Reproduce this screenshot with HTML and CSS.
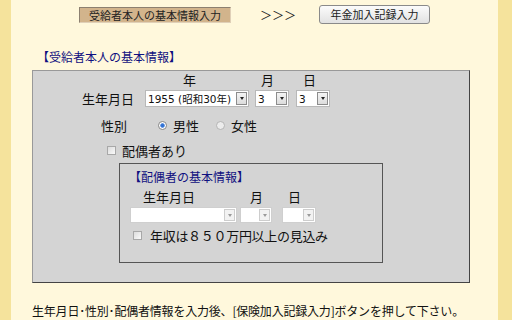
FILE: index.html
```html
<!DOCTYPE html>
<html lang="ja">
<head>
    <meta charset="UTF-8">
    <meta name="viewport" content="width=device-width, initial-scale=1.0">
    <title>受給者本人の基本情報入力</title>
    <link rel="stylesheet" href="styles.css">
</head>
<body>
    <div class="main">
        <div class="steps">
            <span class="step-current">受給者本人の基本情報入力</span>
            <span class="arrows">＞＞＞</span>
            <button class="step-next">年金加入記録入力</button>
        </div>

        <h2 class="section-title">【受給者本人の基本情報】</h2>

        <div class="panel">
            <div class="heads own-heads">
                <span>年</span><span class="h-month">月</span><span class="h-day">日</span>
            </div>
            <div class="birth-row">
                <span class="label">生年月日</span>
                <span class="select s-year"><span class="val">1955 (昭和30年)</span><span class="drop"></span></span>
                <span class="select s-month"><span class="val">3</span><span class="drop"></span></span>
                <span class="select s-day"><span class="val">3</span><span class="drop"></span></span>
            </div>
            <div class="gender-row">
                <span class="label">性別</span>
                <label class="radio first"><span class="dot checked"></span>男性</label>
                <label class="radio"><span class="dot"></span>女性</label>
            </div>
            <label class="check spouse-check"><span class="box"></span>配偶者あり</label>

            <div class="spouse-panel">
                <div class="sub-title">【配偶者の基本情報】</div>
                <div class="heads spouse-heads">
                    <span>生年月日</span><span class="h-month">月</span><span class="h-day">日</span>
                </div>
                <div class="spouse-row">
                    <span class="select disabled s-year"><span class="val"></span><span class="drop"></span></span>
                    <span class="select disabled s-month"><span class="val"></span><span class="drop"></span></span>
                    <span class="select disabled s-day"><span class="val"></span><span class="drop"></span></span>
                </div>
                <label class="check income-check"><span class="box"></span>年収は８５０万円以上の見込み</label>
            </div>
        </div>

        <p class="note">生年月日･性別･配偶者情報を入力後、[保険加入記録入力]ボタンを押して下さい。</p>
    </div>
</body>
</html>
```

FILE: styles.css
```css
body {
    margin: 0;
    background: #f5e39c;
    font-family: "Noto Sans CJK JP", sans-serif;
    color: #111;
}
.main {
    margin-left: 11px;
    width: 487px;
    height: 320px;
    background: #fff8dc;
    overflow: hidden;
}

/* step navigation */
.steps {
    display: flex;
    align-items: center;
    height: 19px;
    padding: 5px 0 0 68px;
}
.step-current {
    box-sizing: border-box;
    width: 152px;
    height: 16px;
    background: #d2b48c;
    border: 1px solid #8c8070;
    border-right-color: #e0d0b8;
    border-bottom-color: #e0d0b8;
    font-size: 11px;
    line-height: 14px;
    text-align: center;
    color: #222;
}
.arrows {
    margin-left: 29px;
    width: 37px;
    font-size: 12px;
    color: #222;
}
.step-next {
    margin-left: 22px;
    width: 111px;
    height: 19px;
    padding: 0;
    font-family: inherit;
    font-size: 11px;
    line-height: 17px;
    color: #222;
    background: linear-gradient(#fbfbfb, #e2e2e2);
    border: 1px solid #8a8a8a;
    border-radius: 3px;
}

.section-title {
    margin: 25px 0 0 26px;
    font-size: 12px;
    font-weight: normal;
    line-height: 16px;
    color: #101080;
}

/* main gray panel */
.panel {
    box-sizing: border-box;
    margin: 5px 0 0 21px;
    width: 438px;
    height: 213px;
    background: #d4d4d4;
    border: 1px solid #444;
    border-top-color: #999;
    border-left-color: #999;
    font-size: 13px;
}
.heads {
    display: flex;
    height: 14px;
    line-height: 14px;
}
.own-heads {
    margin-top: 2px;
    padding-left: 150px;
}
.own-heads .h-month { margin-left: 65px; }
.own-heads .h-day { margin-left: 29px; }

.birth-row {
    display: flex;
    align-items: center;
    margin-top: 3px;
    height: 17px;
    padding-left: 49px;
}
.birth-row .label {
    width: 63px;
    line-height: 17px;
}

/* fake select boxes */
.select {
    box-sizing: border-box;
    display: flex;
    align-items: center;
    height: 17px;
    background: #fff;
    border: 1px solid #b8b8b8;
    font-family: "DejaVu Sans", "Noto Sans CJK JP", sans-serif;
    font-size: 10.5px;
}
.select .val {
    flex: 1;
    padding-left: 2px;
    white-space: nowrap;
    overflow: hidden;
}
.select .drop {
    box-sizing: border-box;
    width: 11px;
    height: 13px;
    margin-right: 1px;
    background: linear-gradient(#f4f4f4, #dcdcdc);
    border: 1px solid #8c8c8c;
    display: flex;
    align-items: center;
    justify-content: center;
}
.select .drop::after {
    content: "";
    border-left: 2.5px solid transparent;
    border-right: 2.5px solid transparent;
    border-top: 3px solid #222;
}
.birth-row .s-year { width: 104px; }
.birth-row .s-month { width: 34px; margin-left: 6px; }
.birth-row .s-day { width: 34px; margin-left: 7px; }

.select.disabled {
    height: 16px;
    border-color: #cfcfcf;
}
.select.disabled .drop {
    height: 12px;
    background: #f2f2f2;
    border-color: #cdcdcd;
}
.select.disabled .drop::after {
    border-top-color: #9a9a9a;
}

/* gender radios */
.gender-row {
    display: flex;
    align-items: center;
    margin-top: 11px;
    height: 15px;
    padding-left: 68px;
}
.gender-row .label { width: 26px; }
.radio {
    display: flex;
    align-items: center;
    margin-left: 17px;
}
.radio.first { margin-left: 31px; }
.dot {
    box-sizing: border-box;
    width: 9px;
    height: 9px;
    margin-right: 6px;
    border-radius: 50%;
    border: 1px solid #b4b4b4;
    background: #ececec;
}
.dot.checked {
    border-color: #888;
    background: radial-gradient(circle, #2e6fd0 0, #3a78d8 1.8px, #fff 2.6px);
}

/* checkboxes */
.check {
    display: flex;
    align-items: center;
}
.box {
    box-sizing: border-box;
    width: 9px;
    height: 9px;
    border: 1px solid #a8a8a8;
    background: linear-gradient(135deg, #dcdcdc, #fafafa);
}
.spouse-check {
    margin-top: 10px;
    height: 15px;
    padding-left: 74px;
}
.spouse-check .box { margin-right: 6px; }

/* spouse sub panel */
.spouse-panel {
    box-sizing: border-box;
    margin: 5px 0 0 86px;
    width: 264px;
    height: 100px;
    border: 1px solid #555;
}
.sub-title {
    padding: 6px 0 0 9px;
    font-size: 12px;
    line-height: 14px;
    color: #101080;
}
.spouse-heads {
    margin-top: 6px;
    padding-left: 23px;
}
.spouse-heads .h-month { margin-left: 55px; }
.spouse-heads .h-day { margin-left: 25px; }

.spouse-row {
    display: flex;
    margin-top: 3px;
    padding-left: 10px;
}
.spouse-row .s-year { width: 107px; }
.spouse-row .s-month { width: 32px; margin-left: 3px; }
.spouse-row .s-day { width: 34px; margin-left: 10px; }

.income-check {
    margin-top: 5px;
    height: 15px;
    padding-left: 13px;
    letter-spacing: -0.3px;
}
.income-check .box { margin-right: 8px; }

.note {
    margin: 20px 0 0 21px;
    font-size: 12px;
    line-height: 16px;
    letter-spacing: -0.2px;
    white-space: nowrap;
}
```
